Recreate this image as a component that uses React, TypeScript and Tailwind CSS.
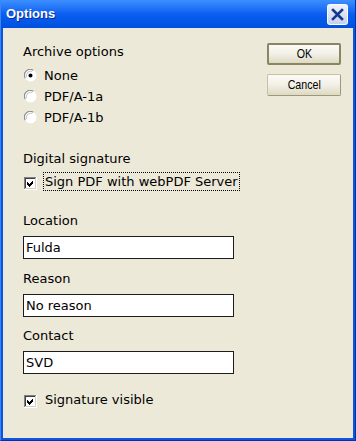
import React from "react";

const Radio = ({ checked }: { checked?: boolean }) => (
  <svg width="13" height="13" viewBox="0 0 12 12" className="shrink-0">
    <circle cx="6" cy="6" r="5.5" fill="#fff" />
    <path d="M1.2 8.5 A5.3 5.3 0 0 1 8.5 1.2" fill="none" stroke="#8a8a8a" strokeWidth="1" />
    <path d="M2.3 7.5 A4.1 4.1 0 0 1 7.5 2.3" fill="none" stroke="#c8c8c8" strokeWidth="1" />
    {checked && <circle cx="6" cy="6" r="1.8" fill="#000" />}
  </svg>
);

const Check = ({ checked }: { checked?: boolean }) => (
  <svg width="13" height="13" viewBox="0 0 13 13" shapeRendering="crispEdges" className="shrink-0">
    <rect x="0" y="0" width="13" height="13" fill="#fff" />
    <rect x="0" y="0" width="12" height="1" fill="#808080" />
    <rect x="0" y="0" width="1" height="12" fill="#808080" />
    <rect x="1" y="1" width="10" height="1" fill="#404040" />
    <rect x="1" y="1" width="1" height="10" fill="#404040" />
    <rect x="1" y="11" width="11" height="1" fill="#d4d0c8" />
    <rect x="11" y="1" width="1" height="11" fill="#d4d0c8" />
    {checked && <polygon points="3,5 5,7 9,3 9,6 5,10 3,8" fill="#000" />}
  </svg>
);

const Field = ({ label, value, className }: { label: string; value: string; className?: string }) => (
  <div className={className}>
    <div className="h-[16px] leading-[16px]">{label}</div>
    <div className="mt-[7px] h-[23px] border border-[#1c1c1c] bg-white pl-[2px] leading-[21px]">{value}</div>
  </div>
);

const Btn = ({ children, primary, className }: { children: React.ReactNode; primary?: boolean; className?: string }) => (
  <button
    className={
      "w-[74px] h-[22px] flex items-center justify-center rounded-[2px] bg-gradient-to-b from-[#fbfaf6] via-[#f2f0e6] to-[#ddd9c3] text-black text-[13px] font-['Liberation_Sans',Arial,sans-serif] " +
      (primary
        ? "border-2 border-[#8c8564] "
        : "border border-[#c6c1a6] border-r-[#9f9878] border-b-[#9f9878] ") +
      (className ?? "")
    }
  >
    <span className="inline-block scale-x-[0.82]">{children}</span>
  </button>
);

export default function App() {
  return (
    <div className="w-[356px] h-[441px] flex flex-col bg-[#0a55e2] border-l border-l-[#3b85f5] border-r border-r-[#0032b0] border-b border-b-[#0032b0] font-['DejaVu_Sans',Verdana,sans-serif] text-[13px] text-black">
      <div className="h-[28px] shrink-0 flex justify-between bg-gradient-to-b from-[#3d8fff] via-[#0a5ff0] to-[#0050e0] pl-[5px] pr-[7px]">
        <span className="mt-[6px] font-['Liberation_Sans',Arial,sans-serif] font-bold text-[13px] leading-[16px] text-white [text-shadow:1px_1px_0_#0a2a9a]">
          Options
        </span>
        <div className="mt-[4px] w-[21px] h-[21px] rounded-[3px] border border-white/90 bg-gradient-to-b from-[#eef2fa] to-[#c6d2ea] flex items-center justify-center">
          <svg width="13" height="13" viewBox="0 0 13 13">
            <path d="M2 2 L11 11 M11 2 L2 11" stroke="#163892" strokeWidth="2.6" strokeLinecap="square" />
          </svg>
        </div>
      </div>
      <div className="flex-1 ml-[2px] mr-[2px] mb-[2px] bg-[#ece9d8] flex">
        <div className="pl-[20px] w-[231px] shrink-0 flex flex-col">
          <div className="mt-[16px] h-[16px] leading-[16px]">Archive options</div>
          <div className="mt-[5px] flex flex-col">
            {[
              ["None", true],
              ["PDF/A-1a", false],
              ["PDF/A-1b", false],
            ].map(([t, c]) => (
              <div key={t as string} className="h-[21px] flex items-center pl-[1px] gap-[7px]">
                <Radio checked={c as boolean} />
                <span className="leading-[16px]">{t as string}</span>
              </div>
            ))}
          </div>
          <div className="mt-[23px] h-[16px] leading-[16px]">Digital signature</div>
          <div className="mt-[5px] h-[19px] flex items-start pl-[1px]">
            <div className="mt-[5px]">
              <Check checked />
            </div>
            <span className="ml-[6px] h-[19px] whitespace-nowrap border border-dotted border-black px-[1px] leading-[17px]">
              Sign PDF with webPDF Server
            </span>
          </div>
          <Field label="Location" value="Fulda" className="mt-[22px]" />
          <Field label="Reason" value="No reason" className="mt-[12px]" />
          <Field label="Contact" value="SVD" className="mt-[11px]" />
          <div className="mt-[16px] h-[19px] flex items-start pl-[1px]">
            <div className="mt-[5px]">
              <Check checked />
            </div>
            <span className="ml-[6px] h-[19px] whitespace-nowrap border border-transparent px-[1px] leading-[17px]">
              Signature visible
            </span>
          </div>
        </div>
        <div className="ml-[33px] mt-[15px] flex flex-col">
          <Btn primary>OK</Btn>
          <Btn className="mt-[9px]">Cancel</Btn>
        </div>
      </div>
    </div>
  );
}
